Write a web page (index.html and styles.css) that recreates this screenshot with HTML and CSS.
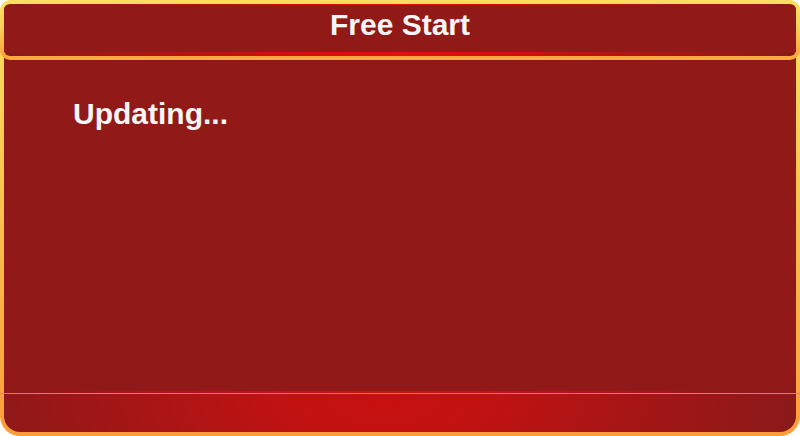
FILE: index.html
```
<!DOCTYPE html>
<html lang="en">
<head>
<meta charset="utf-8">
<meta name="viewport" content="width=device-width, initial-scale=1">
<title>Free Start</title>
<link rel="stylesheet" href="styles.css">
</head>
<body>
<section class="window">
  <header class="titlebar">
    <div class="titlebar-glow">
      <h1 class="title">Free Start</h1>
    </div>
  </header>
  <main class="content">
    <p class="status" role="status">Updating...</p>
  </main>
  <footer class="footer"></footer>
</section>
</body>
</html>
```

FILE: styles.css
```
* {
  box-sizing: border-box;
}

body {
  margin: 0;
  background: #fff;
  color: #f5f5f5;
  font-family: "Liberation Sans", Arial, sans-serif;
}

.window {
  display: flex;
  flex-direction: column;
  min-height: 100vh;
  border-radius: 12px 12px 20px 20px;
  background: linear-gradient(#fcde61, #fbd55b 20%, #fb9d3a);
}

.titlebar {
  z-index: 1;
  padding: 4px;
  border-radius: 10px;
  background: linear-gradient(#fcde61, #fcd45c 40%, #fba840 90%);
}

.titlebar-glow {
  padding: 1px 0 4px;
  border-radius: 6px;
  overflow: hidden;
  background: radial-gradient(circle farthest-side at center, #e60f0f, #c41010 45%, #931918 90%, #871a1a);
}

.title {
  margin: 0;
  padding: 3px 0 10px;
  background: #911917;
  font-size: 30px;
  line-height: 34px;
  text-align: center;
}

/* Runs up behind the rounded title bar so its lower corners sit on red. */
.content {
  flex: 1;
  margin: -12px 4px 0;
  padding: 49px 69px 24px;
  background: #911917;
}

.status {
  margin: 0;
  font-size: 30px;
  font-weight: bold;
  line-height: 34px;
}

.footer {
  height: 45px;
  border: solid transparent;
  border-width: 0 4px 4px;
  border-radius: 0 0 20px 20px;
  background:
    linear-gradient(#a99080, #a99080) 0 2px / 100% 1px no-repeat border-box,
    radial-gradient(ellipse 430px 250px at 48% 0, #c81010, #c01212 25%, #871a1a) padding-box;
}
```
